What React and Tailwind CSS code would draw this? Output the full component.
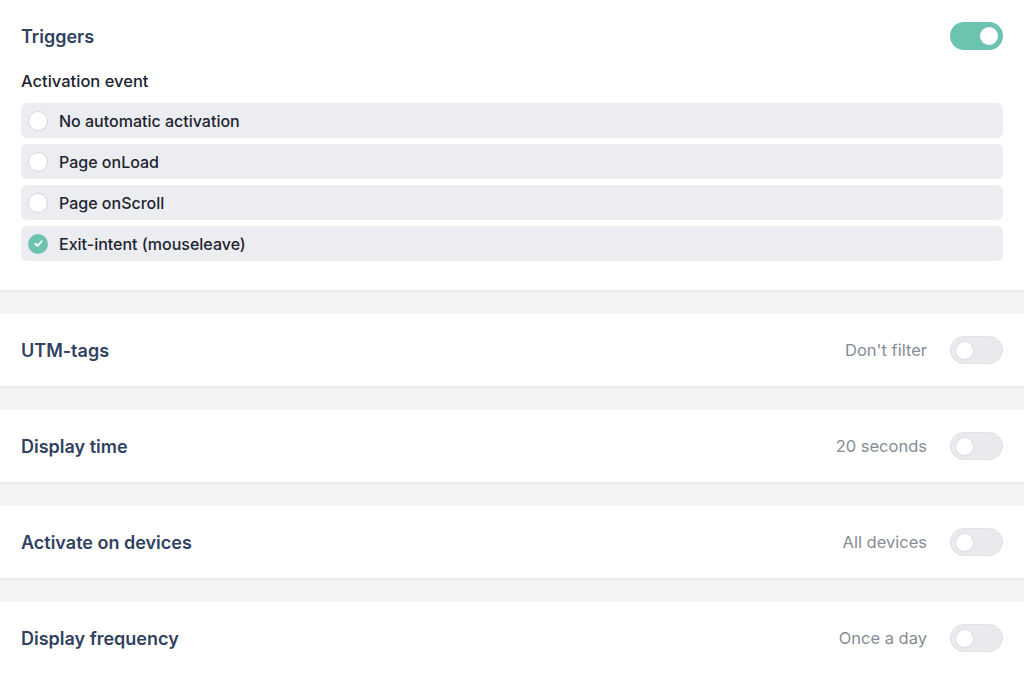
import React from "react";

function Toggle({ on }) {
  return on ? (
    <div className="w-[53px] h-[28px] rounded-full bg-[#6cc4b0] flex items-center justify-end pr-[5px] shrink-0">
      <div className="w-[18px] h-[18px] rounded-full bg-white" />
    </div>
  ) : (
    <div className="w-[53px] h-[28px] rounded-full bg-[#e8eaed] border border-[#dfe2e6] flex items-center pl-[4px] shrink-0">
      <div className="w-[19px] h-[19px] rounded-full bg-white border border-[#d9dce1]" />
    </div>
  );
}

function Radio({ checked, label }) {
  return (
    <div className="h-[35px] rounded-[6px] bg-[#ecedf0] flex items-center pl-[7px] gap-[11px]">
      {checked ? (
        <div className="w-[20px] h-[20px] rounded-full bg-[#6cc4b0] flex items-center justify-center">
          <svg width="11" height="11" viewBox="0 0 12 12" fill="none">
            <path d="M2.5 6.3 L5 8.6 L9.5 3.6" stroke="white" strokeWidth="2" strokeLinecap="round" strokeLinejoin="round" />
          </svg>
        </div>
      ) : (
        <div className="w-[20px] h-[20px] rounded-full bg-white border border-[#d4d7dc]" />
      )}
      <span className="text-[16px] font-medium text-[#1d2430]">{label}</span>
    </div>
  );
}

function Card({ title, value }) {
  return (
    <div className="bg-white h-[72px] flex items-center justify-between px-[21px] shadow-[0_2px_3px_rgba(0,0,0,0.06)]">
      <span className="text-[18px] font-semibold text-[#30425f]">{title}</span>
      <div className="flex items-center gap-[23px]">
        <span className="text-[16.5px] text-[#868c95]">{value}</span>
        <Toggle on={false} />
      </div>
    </div>
  );
}

export default function App() {
  return (
    <div className="w-[1024px] h-[674px] overflow-hidden bg-[#f3f4f6] flex flex-col gap-[24px]" style={{ fontFamily: "Inter, 'Noto Sans', sans-serif" }}>
      <div className="bg-white px-[21px] pt-[22px] pb-[29px] shadow-[0_2px_3px_rgba(0,0,0,0.06)]">
        <div className="flex items-center justify-between h-[28px]">
          <span className="text-[18px] font-semibold text-[#30425f]">Triggers</span>
          <Toggle on />
        </div>
        <div className="mt-[20px] text-[16.5px] leading-[22px] font-medium text-[#1d2430]">Activation event</div>
        <div className="mt-[11px] flex flex-col gap-[6px]">
          <Radio label="No automatic activation" />
          <Radio label="Page onLoad" />
          <Radio label="Page onScroll" />
          <Radio checked label="Exit-intent (mouseleave)" />
        </div>
      </div>
      <Card title="UTM-tags" value="Don't filter" />
      <Card title="Display time" value="20 seconds" />
      <Card title="Activate on devices" value="All devices" />
      <Card title="Display frequency" value="Once a day" />
    </div>
  );
}
